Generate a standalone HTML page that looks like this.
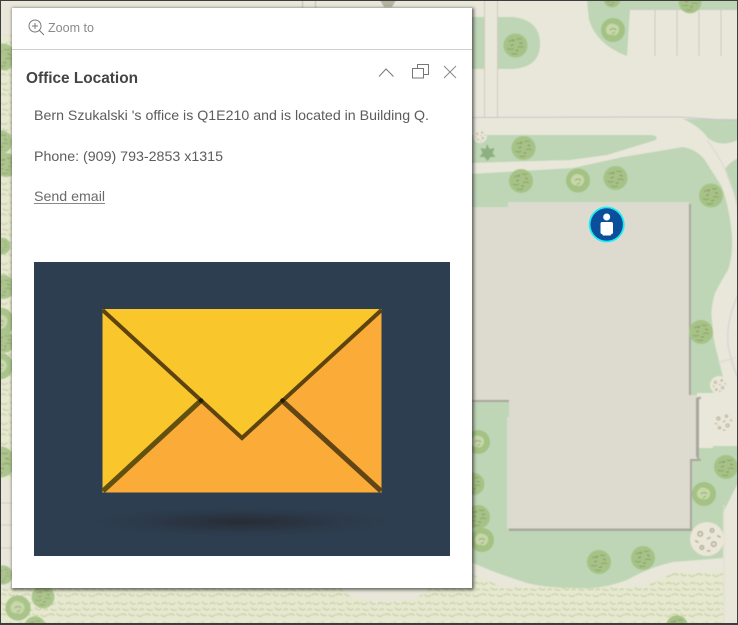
<!DOCTYPE html>
<html><head><meta charset="utf-8"><style>
html,body{margin:0;padding:0;background:#e9e7da}
body{width:738px;height:625px;overflow:hidden;position:relative}
svg{position:absolute;left:0;top:0}
#map{filter:blur(.55px)}
#panel{position:absolute;left:12px;top:8px;width:460px;height:580px;background:#fff;box-shadow:1px 1px 3px 1px rgba(40,40,40,.65)}
#frame{position:absolute;left:0;top:0;width:736px;height:622px;border:1px solid #3d3d3d;border-bottom-width:2px;pointer-events:none}
text{font-family:"Liberation Sans",sans-serif}
</style></head><body>
<svg id="map" width="738" height="625" viewBox="0 0 738 625" xmlns="http://www.w3.org/2000/svg">
<defs>
<pattern id="tx" width="24" height="20" patternUnits="userSpaceOnUse">
<rect width="24" height="20" fill="#e6e9d0"/>
<g fill="none" stroke="#cdd3ad" stroke-width="1.400" stroke-linecap="round">
<path d="M1 3q3 3 6 0"/><path d="M10 2q3 3 5 2"/><path d="M18 4q3-3 5 0"/>
<path d="M3 9q3 2 5 1"/><path d="M11 8q3 3 6 1"/><path d="M20 10q2-2 4 0"/>
<path d="M0 15q3-2 6 0"/><path d="M9 14q3 3 5 1"/><path d="M17 15q3 3 6 0"/>
</g></pattern>
<g id="t">
<circle r="12" fill="#a6c387"/>
<g fill="none" stroke="#8aa668" stroke-width="1"><path d="M-7-4q3-2 5 0M1-7q3 1 5 0M-8 3q3 2 6 0M2 2q3-2 6 0M-4 8q3 1 6 0"/></g>
<g fill="none" stroke="#a08a6c" stroke-width="1"><path d="M-3-6l2 1M4-3l3 1M-5 0l3-1M0 5l3 0"/></g>
</g>
<g id="tl">
<circle r="12" fill="#a3c283"/>
<path d="M-7-2q3-6 8-4q6 1 5 7q-2 6-7 4q-7 0-6-7z" fill="#c6d7a8"/><path d="M-3 0q3-3 6 0M-1 4l3-2" stroke="#98ab7e" fill="none"/>
</g>
<g id="s">
<circle r="10" fill="#eae6d8"/>
<g fill="none" stroke="#b7b29c" stroke-width=".9"><circle cx="-4" cy="-3" r="1.300"/><circle cx="3" cy="-5" r="1"/><circle cx="4" cy="3" r="1.300"/><circle cx="-3" cy="5" r="1"/><path d="M-7 1l2 1M0 0l2-1M6-2l2 1M0 7l2 0"/></g>
</g>
</defs>

<rect width="738" height="625" fill="#e9e7da"/>
<!-- textures -->
<rect x="0" y="35" width="13" height="446" fill="url(#tx)"/>
<rect x="0" y="587" width="723" height="38" fill="url(#tx)"/>
<path d="M460 570L493 583Q525 596 560 600Q590 600 610 597Q640 590 673 573L723 572V625H460Z" fill="url(#tx)"/>
<path d="M440 588L493 583L560 625H440Z" fill="url(#tx)"/>
<ellipse cx="385" cy="586" rx="44" ry="16" fill="#e9e7da"/>

<!-- lawns -->
<g fill="#bed6b6">
<path d="M470 17H484V69H470Z"/>
<path d="M497 17H513Q540 20 540 44Q540 67 513 69H497Z"/>
<path d="M587 0H738V9H630L627 56Q597 45 589 20Z"/>
<path d="M470 135H650Q658 135 656 140L607 155L570 160L470 163Z"/>
<path d="M683 119H738V140Q720 148 708 138Q698 125 683 119Z"/>
<path d="M738 158Q726 165 725 170L738 205Z"/>
<path d="M470 174L573 168L623 157L683 147Q700 150 708 165L722 187Q730 210 732 237Q733 255 728 270Q720 283 715 293Q710 310 712 320Q713 340 717 353L723 377L713 393H697V448H713V446L738 446V483L723 513V558L673 562Q650 567 627 580Q600 590 577 588Q545 588 527 583Q495 573 473 563L470 560Z"/>
</g>
<!-- lines -->
<g stroke="#cdcbc1" stroke-width="1" fill="none">
<path d="M484.500 0V117M497.500 0V117"/>
<path d="M655 9V56M677 9V56M699 9V56M721 9V56M630 9.500H738"/>
<path d="M472 117.500L640 117L680 117L738 121" stroke="#c8c5cc"/>
<path d="M707 140Q722 160 730 180Q737 200 738 215" stroke="#d9d8cb"/>
<path d="M738 295Q726 320 728 345Q732 365 738 378" stroke="#d2d1d6"/>
<path d="M717 363L735 358" stroke="#d9d8cb"/>
<path d="M724 505V625" stroke="#e0ded2"/>
<path d="M302.500 0V8M315.500 0V8" stroke="#c0bdaf"/>
<path d="M0 503H12M0 525H12M0 548H12" stroke="#d2d0c3"/>
</g>
<path d="M380 0H396L392 7H384Z" fill="#b6b2a0"/>

<!-- building -->
<path d="M472 209H510V204H691V397H701V399H699V459H701V461H692V531H509V419H511V402H472Z" fill="#a9a89e"/>
<path d="M472 207H508V202H689V395H697V398H696V457H697V459H690V528.500H507V417H509V400H472Z" fill="#dddbcf"/>

<!-- left strip trees -->
<g opacity=".9">
<use href="#t" transform="translate(3 57) scale(1.1)"/>
<use href="#t" transform="translate(0 142) scale(1)"/>
<use href="#t" transform="translate(6 165) scale(1)"/>
<use href="#t" transform="translate(2 246) scale(.7)"/>
<use href="#t" transform="translate(3 287) scale(1)"/>
<use href="#tl" transform="translate(0 322) scale(1.2)"/>
<use href="#t" transform="translate(4 342) scale(.9)"/>
<use href="#tl" transform="translate(0 366) scale(1.1)"/>
<use href="#t" transform="translate(0 462) scale(1.3)"/>
<use href="#t" transform="translate(43 597) scale(.95)"/>
<use href="#tl" transform="translate(18 608) scale(1.05)"/>
<use href="#t" transform="translate(35 627) scale(.9)"/>
<use href="#t" transform="translate(3 575) scale(.8)"/>
</g>
<!-- map trees -->
<use href="#t" x="515.500" y="45.500"/>
<use href="#tl" x="613" y="30"/>
<use href="#t" transform="translate(690 2) scale(.95)"/>
<use href="#t" transform="translate(612 -1) scale(.7)"/>
<use href="#t" x="523.500" y="148"/>
<use href="#t" x="521" y="181"/>
<use href="#tl" x="578" y="180.500"/>
<use href="#t" x="615.500" y="178"/>
<use href="#t" x="711" y="195.500"/>
<use href="#t" x="701" y="332"/>
<use href="#tl" x="478" y="442"/>
<use href="#t" transform="translate(473 484) scale(.95)"/>
<use href="#t" x="478" y="517"/>
<use href="#tl" x="482" y="540"/>
<use href="#t" x="599" y="562"/>
<use href="#t" x="643" y="558"/>
<use href="#tl" x="704" y="494"/>
<use href="#t" x="726" y="467"/>
<use href="#t" transform="translate(677 626) scale(.9)"/>
<use href="#s" transform="translate(719 385) scale(.9)"/>
<use href="#s" transform="translate(723 422) scale(1.150)"/>
<use href="#s" transform="translate(707 539) scale(1.700)"/>
<use href="#s" transform="translate(480 136) scale(.7)"/>
<path d="M487 144l2.500 5 5-1-2 5 3 4-5 0-3 4-3-4-5 0 3-4-2-5 5 1z" fill="#8db081"/>
</svg>

<svg width="738" height="625" viewBox="0 0 738 625" xmlns="http://www.w3.org/2000/svg">
<!-- pin -->
<circle cx="606.700" cy="224.500" r="18" fill="#1ceef3"/>
<circle cx="606.700" cy="224.500" r="16.200" fill="#0b4f9c"/>
<circle cx="606.700" cy="217" r="3.500" fill="#fff"/>
<path d="M602 222H611.500Q613 222 613 224V232.500Q613 234 611.500 234L610.500 235.500H603L602 234Q600.500 234 600.500 232.500V224Q600.500 222 602 222Z" fill="#fff"/>
</svg>

<div id="panel"></div>

<svg width="738" height="625" viewBox="0 0 738 625" xmlns="http://www.w3.org/2000/svg">
<defs><radialGradient id="sh"><stop offset="0" stop-color="#272c35"/><stop offset=".45" stop-color="#2a3441" stop-opacity=".75"/><stop offset="1" stop-color="#2d3e50" stop-opacity="0"/></radialGradient></defs>
<path d="M12 49.500H472" stroke="#cfcfcf" stroke-width="1"/>
<g fill="none" stroke="#7a7a7a" stroke-width="1"><circle cx="35" cy="26" r="6"/><path d="M39.500 30.500L44 35M35 23V29M32 26H38"/></g>
<text x="48" y="32" font-size="13" fill="#8a8a8a" textLength="46" lengthAdjust="spacingAndGlyphs">Zoom to</text>
<text x="26" y="83" font-size="16" font-weight="700" fill="#444" textLength="112" lengthAdjust="spacingAndGlyphs">Office Location</text>
<g fill="none" stroke="#777" stroke-width="1">
<path d="M379 76.500L386 69L393.500 76.500"/>
<path d="M417.500 68V64.500H428.500V74.500H423.500"/>
<rect x="412.500" y="68.500" width="11" height="9.500"/>
<path d="M444 66L456 78M456 66L444 78" stroke="#888"/>
</g>
<text x="34" y="120" font-size="14" fill="#5c5c5c" textLength="395" lengthAdjust="spacingAndGlyphs">Bern Szukalski 's office is Q1E210 and is located in Building Q.</text>
<text x="34" y="161" font-size="14" fill="#5c5c5c" textLength="189" lengthAdjust="spacingAndGlyphs">Phone: (909) 793-2853 x1315</text>
<text x="34" y="201" font-size="14" fill="#6a6a6a" textLength="71" lengthAdjust="spacingAndGlyphs">Send email</text>
<path d="M34 203.500H105" stroke="#888" stroke-width="1"/>

<rect x="34" y="262" width="416" height="294" fill="#2d3e50"/>
<ellipse cx="242" cy="522" rx="172" ry="17" fill="url(#sh)"/>
<rect x="102.500" y="309" width="279" height="183.500" fill="#fbab37"/>
<path d="M102.500 309V492.500L201 401Z" fill="#f9c62b"/>
<path d="M102.500 309H381.500L242 437Z" fill="#f9c62b"/>
<path d="M103 491L201 400.500" stroke="#615010" stroke-width="5" fill="none"/>
<path d="M381 491L282 400.500" stroke="#624516" stroke-width="5" fill="none"/>
<path d="M102.500 310L242 438L381.500 310" stroke="#5c4310" stroke-width="4" fill="none"/>
<circle cx="201" cy="400.500" r="2.300" fill="#231c08"/><circle cx="282.500" cy="400.500" r="2.300" fill="#231c08"/>
</svg>
<div id="frame"></div>
</body></html>
